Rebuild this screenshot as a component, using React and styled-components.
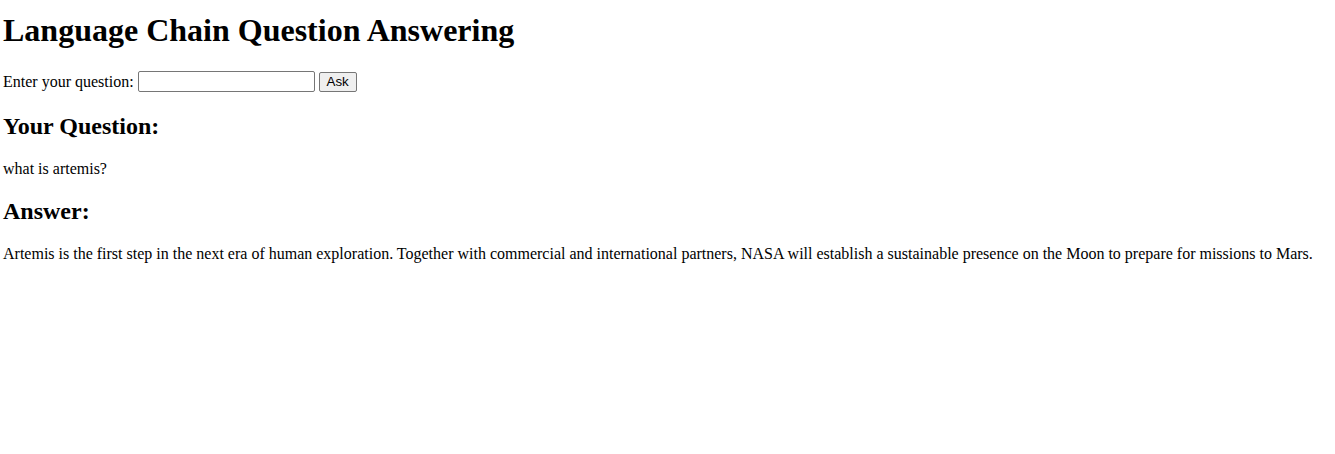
import React from "react";
import styled, { createGlobalStyle } from "styled-components";

const GlobalStyle = createGlobalStyle`
  body {
    margin: 0;
    font-family: "Liberation Serif", "Times New Roman", serif;
    background: #fff;
    color: #000;
  }
`;

const Page = styled.div`
  padding: 0 3px;
`;

const Title = styled.h1`
  font-size: 32px;
  margin: 12.44px 0 21.44px;
`;

const AskForm = styled.form`
  display: flex;
  align-items: center;
  height: 22px;
`;

const Label = styled.label`
  margin-right: 4px;
`;

const QuestionInput = styled.input`
  box-sizing: border-box;
  width: 177px;
  height: 21px;
  padding: 1px 2px;
  border: 1px solid #767676;
  border-radius: 2px;
  background: #fff;
  font-family: "Liberation Sans", Arial, sans-serif;
  font-size: 13.33px;
  margin: 0 4px 0 0;
`;

const AskButton = styled.button`
  box-sizing: border-box;
  width: 38px;
  height: 20px;
  padding: 0 6px;
  border: 1px solid #767676;
  border-radius: 2px;
  background: #efefef;
  color: #000;
  font-family: "Liberation Sans", Arial, sans-serif;
  font-size: 13.33px;
  margin: 0;
`;

const SectionTitle = styled.h2`
  font-size: 24px;
  margin: 19.92px 0;
`;

const Text = styled.p`
  margin: 16px 0;
`;

export default function App() {
  return (
    <Page>
      <GlobalStyle />
      <Title>Language Chain Question Answering</Title>
      <AskForm onSubmit={(e) => e.preventDefault()}>
        <Label htmlFor="q">Enter your question:</Label>
        <QuestionInput id="q" type="text" />
        <AskButton type="submit">Ask</AskButton>
      </AskForm>
      <SectionTitle>Your Question:</SectionTitle>
      <Text>what is artemis?</Text>
      <SectionTitle>Answer:</SectionTitle>
      <Text>
        Artemis is the first step in the next era of human exploration. Together with commercial and
        international partners, NASA will establish a sustainable presence on the Moon to prepare for
        missions to Mars.
      </Text>
    </Page>
  );
}
